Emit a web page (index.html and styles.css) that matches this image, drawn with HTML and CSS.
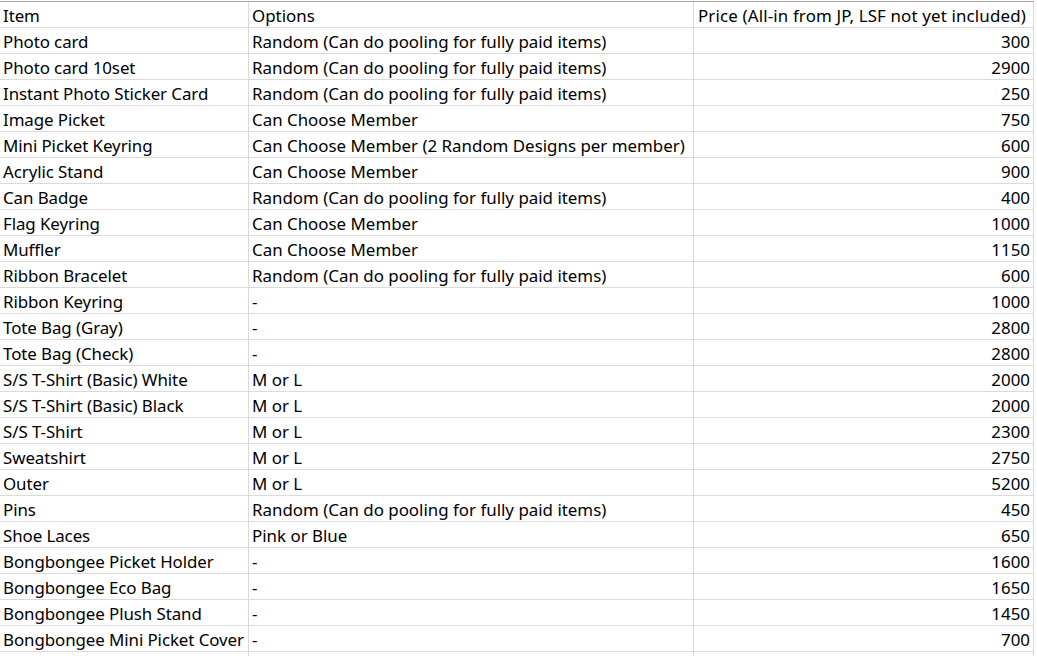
FILE: index.html
```html
<!DOCTYPE html>
<html>
<head>
<meta charset="utf-8">
<link rel="stylesheet" href="styles.css">
</head>
<body>
<div class="sheet">
  <div class="row head"><div class="c c1">Item</div><div class="c c2">Options</div><div class="c c3 left">Price (All-in from JP, LSF not yet included)</div></div>
  <div class="row"><div class="c c1">Photo card</div><div class="c c2">Random (Can do pooling for fully paid items)</div><div class="c c3">300</div></div>
  <div class="row"><div class="c c1">Photo card 10set</div><div class="c c2">Random (Can do pooling for fully paid items)</div><div class="c c3">2900</div></div>
  <div class="row"><div class="c c1">Instant Photo Sticker Card</div><div class="c c2">Random (Can do pooling for fully paid items)</div><div class="c c3">250</div></div>
  <div class="row"><div class="c c1">Image Picket</div><div class="c c2">Can Choose Member</div><div class="c c3">750</div></div>
  <div class="row"><div class="c c1">Mini Picket Keyring</div><div class="c c2">Can Choose Member (2 Random Designs per member)</div><div class="c c3">600</div></div>
  <div class="row"><div class="c c1">Acrylic Stand</div><div class="c c2">Can Choose Member</div><div class="c c3">900</div></div>
  <div class="row"><div class="c c1">Can Badge</div><div class="c c2">Random (Can do pooling for fully paid items)</div><div class="c c3">400</div></div>
  <div class="row"><div class="c c1">Flag Keyring</div><div class="c c2">Can Choose Member</div><div class="c c3">1000</div></div>
  <div class="row"><div class="c c1">Muffler</div><div class="c c2">Can Choose Member</div><div class="c c3">1150</div></div>
  <div class="row"><div class="c c1">Ribbon Bracelet</div><div class="c c2">Random (Can do pooling for fully paid items)</div><div class="c c3">600</div></div>
  <div class="row"><div class="c c1">Ribbon Keyring</div><div class="c c2">-</div><div class="c c3">1000</div></div>
  <div class="row"><div class="c c1">Tote Bag (Gray)</div><div class="c c2">-</div><div class="c c3">2800</div></div>
  <div class="row"><div class="c c1">Tote Bag (Check)</div><div class="c c2">-</div><div class="c c3">2800</div></div>
  <div class="row"><div class="c c1">S/S T-Shirt (Basic) White</div><div class="c c2">M or L</div><div class="c c3">2000</div></div>
  <div class="row"><div class="c c1">S/S T-Shirt (Basic) Black</div><div class="c c2">M or L</div><div class="c c3">2000</div></div>
  <div class="row"><div class="c c1">S/S T-Shirt</div><div class="c c2">M or L</div><div class="c c3">2300</div></div>
  <div class="row"><div class="c c1">Sweatshirt</div><div class="c c2">M or L</div><div class="c c3">2750</div></div>
  <div class="row"><div class="c c1">Outer</div><div class="c c2">M or L</div><div class="c c3">5200</div></div>
  <div class="row"><div class="c c1">Pins</div><div class="c c2">Random (Can do pooling for fully paid items)</div><div class="c c3">450</div></div>
  <div class="row"><div class="c c1">Shoe Laces</div><div class="c c2">Pink or Blue</div><div class="c c3">650</div></div>
  <div class="row"><div class="c c1">Bongbongee Picket Holder</div><div class="c c2">-</div><div class="c c3">1600</div></div>
  <div class="row"><div class="c c1">Bongbongee Eco Bag</div><div class="c c2">-</div><div class="c c3">1650</div></div>
  <div class="row"><div class="c c1">Bongbongee Plush Stand</div><div class="c c2">-</div><div class="c c3">1450</div></div>
  <div class="row"><div class="c c1">Bongbongee Mini Picket Cover</div><div class="c c2">-</div><div class="c c3">700</div></div>
  <div class="row"><div class="c c1"></div><div class="c c2"></div><div class="c c3"></div></div>
</div>
</body>
</html>
```

FILE: styles.css
```css
html, body {
  margin: 0;
  padding: 0;
  background: #ffffff;
}
body {
  font-family: "Noto Sans", "Open Sans", sans-serif;
  font-size: 16.9px;
  color: #000000;
}
.sheet {
  width: 1034px;
  border-top: 1px solid #a8a8a8;
  margin-top: 1px;
}
.row {
  display: grid;
  grid-template-columns: 249px 445px 340px;
  height: 26px;
  border-bottom: 1px solid #dadada;
  box-sizing: border-box;
}
.c {
  padding: 2px 3px 0;
  white-space: nowrap;
  overflow: hidden;
  line-height: 23px;
  border-right: 1px solid #dadada;
}
.c1 {
  letter-spacing: -0.08px;
}
.c3 {
  text-align: right;
  padding-right: 3px;
}
.c3.left {
  text-align: left;
  padding-left: 4px;
  letter-spacing: 0.15px;
}
```
